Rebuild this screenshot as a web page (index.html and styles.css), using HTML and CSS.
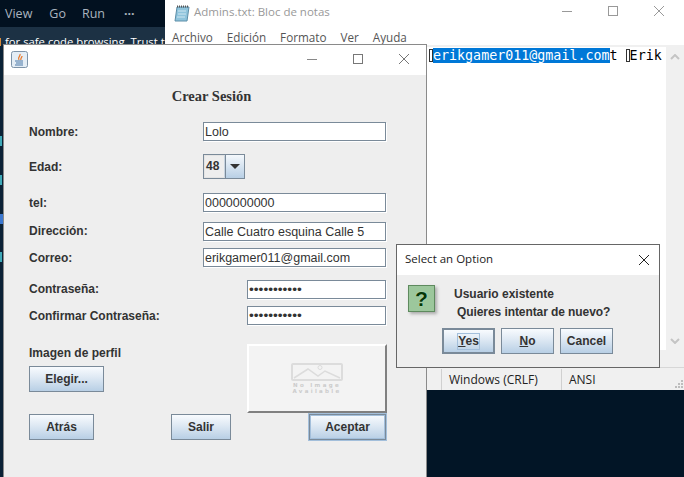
FILE: index.html
```html
<!DOCTYPE html>
<html lang="en">

<head>
    <meta charset="UTF-8" />
    <title>Crear Sesión</title>
    <link rel="stylesheet" href="styles.css">
</head>

<body>
    <!-- Editor behind everything -->
    <div class="editor">
        <div class="editor-menu">
            <span class="menu-view">View</span>
            <span class="menu-go">Go</span>
            <span class="menu-run">Run</span>
            <span class="menu-more">···</span>
        </div>
        <div class="editor-notice"><span class="notice-mark"></span>for safe code browsing. Trust t</div>
        <div class="gutter">
            <span class="mark"></span>
            <span class="mark"></span>
            <span class="mark mark-blue"></span>
            <span class="mark"></span>
        </div>
    </div>

    <!-- Notepad -->
    <div class="notepad">
        <div class="np-title">
            <svg class="np-icon" width="16" height="18" viewBox="0 0 16 18">
                <path d="M3 3h12l-2 14H1z" fill="#8fc4dc" stroke="#5d8ea8" />
                <path d="M4 7h8M4 10h8M3 13h8" stroke="#cfe6f1" />
                <path d="M3 2.5h12" stroke="#555" stroke-dasharray="1 1" stroke-width="2" />
            </svg>
            <span class="np-name">Admins.txt: Bloc de notas</span>
            <div class="np-controls">
                <svg width="12" height="12" viewBox="0 0 12 12"><path d="M1 6.5h10" stroke="#999" /></svg>
                <svg width="12" height="12" viewBox="0 0 12 12"><rect x="1.5" y="1.5" width="9" height="9" fill="none" stroke="#999" /></svg>
                <svg width="12" height="12" viewBox="0 0 12 12"><path d="M1 1l10 10M11 1L1 11" stroke="#999" /></svg>
            </div>
        </div>
        <div class="np-menu">
            <span>Archivo</span><span>Edición</span><span>Formato</span><span>Ver</span><span>Ayuda</span>
        </div>
        <div class="np-main">
            <div class="np-text">
                <span class="box"></span><span class="sel">erikgamer011@gmail.com</span>t <span class="box box-second"></span>Erik
            </div>
            <div class="np-scroll">
                <svg width="10" height="6" viewBox="0 0 10 6"><path d="M1 5l4-4 4 4" fill="none" stroke="#c4c4c4" stroke-width="2" /></svg>
                <svg width="10" height="6" viewBox="0 0 10 6"><path d="M1 1l4 4 4-4" fill="none" stroke="#c4c4c4" stroke-width="2" /></svg>
            </div>
        </div>
        <div class="np-status">
            <span class="st-first"></span>
            <span class="st-eol">Windows (CRLF)</span>
            <span class="st-enc">ANSI</span>
            <svg class="grip" width="10" height="10" viewBox="0 0 10 10">
                <path d="M7 1h2v2H7zM4 4h2v2H4zM7 4h2v2H7zM1 7h2v2H1zM4 7h2v2H4zM7 7h2v2H7z" fill="#bdbdbd" />
            </svg>
        </div>
    </div>

    <!-- Java form window -->
    <div class="win">
        <div class="win-title">
            <svg class="java-icon" width="17" height="17" viewBox="0 0 17 17">
                <rect x="0.5" y="0.5" width="16" height="16" rx="2" fill="#e4edf5" stroke="#7d93a8" />
                <path d="M9 3c1 2-3 3-1 6M11 5c0 2-2 2-1 4" fill="none" stroke="#e8792b" stroke-width="1.3" />
                <path d="M4 10h8M5 12h7M4 14h8" stroke="#4a78a8" />
            </svg>
            <div class="win-controls">
                <svg width="12" height="12" viewBox="0 0 12 12"><path d="M1 6.5h10" stroke="#888" /></svg>
                <svg width="12" height="12" viewBox="0 0 12 12"><rect x="1.5" y="1.5" width="9" height="9" fill="none" stroke="#777" /></svg>
                <svg width="12" height="12" viewBox="0 0 12 12"><path d="M1 1l10 10M11 1L1 11" stroke="#777" /></svg>
            </div>
        </div>
        <div class="form">
            <h1 class="form-title">Crear Sesión</h1>

            <div class="row row-nombre">
                <label class="label-low">Nombre:</label>
                <input class="field" value="Lolo" />
            </div>
            <div class="row row-edad">
                <label>Edad:</label>
                <div class="combo">
                    <span class="combo-value">48</span>
                    <span class="combo-btn"><span class="arrow"></span></span>
                </div>
            </div>
            <div class="row row-tel">
                <label class="label-low">tel:</label>
                <input class="field" value="0000000000" />
            </div>
            <div class="row row-dir">
                <label class="label-high">Dirección:</label>
                <input class="field" value="Calle Cuatro esquina Calle 5" />
            </div>
            <div class="row row-correo">
                <label class="label-low">Correo:</label>
                <input class="field" value="erikgamer011@gmail.com" />
            </div>
            <div class="row row-pass">
                <label class="label-high">Contraseña:</label>
                <input class="field field-short" type="password" value="12345678901" />
            </div>
            <div class="row row-confirm">
                <label>Confirmar Contraseña:</label>
                <input class="field field-short" type="password" value="12345678901" />
            </div>

            <div class="photo-row">
                <div class="photo-left">
                    <label>Imagen de perfil</label>
                    <button class="btn btn-elegir">Elegir...</button>
                </div>
                <div class="photo">
                    <svg width="52" height="18" viewBox="0 0 52 18">
                        <rect x="1" y="1" width="50" height="16" rx="1" fill="none" stroke="#dcdcdc" stroke-width="2" />
                        <path d="M3 15l14-9 10 7 7-5 15 7" fill="none" stroke="#dcdcdc" stroke-width="1.5" />
                        <circle cx="29" cy="4.500" r="2" fill="none" stroke="#dcdcdc" />
                    </svg>
                    <span class="photo-text">No Image</span>
                    <span class="photo-text">Available</span>
                </div>
            </div>

            <div class="actions">
                <button class="btn btn-atras">Atrás</button>
                <button class="btn btn-salir">Salir</button>
                <button class="btn btn-aceptar">Aceptar</button>
            </div>
        </div>
    </div>

    <!-- Option dialog -->
    <div class="dialog">
        <div class="dlg-title">
            <span class="dlg-name">Select an Option</span>
            <svg width="12" height="12" viewBox="0 0 12 12"><path d="M1 1l10 10M11 1L1 11" stroke="#222" /></svg>
        </div>
        <div class="dlg-body">
            <div class="dlg-top">
                <div class="q-icon">?</div>
                <div class="dlg-msg">
                    <p>Usuario existente</p>
                    <p class="msg-second">Quieres intentar de nuevo?</p>
                </div>
            </div>
            <div class="dlg-buttons">
                <button class="btn btn-dlg btn-yes"><span class="focus-mark"><u>Y</u>es</span></button>
                <button class="btn btn-dlg"><u>N</u>o</button>
                <button class="btn btn-dlg">Cancel</button>
            </div>
        </div>
    </div>
</body>

</html>
```

FILE: styles.css
```css
* {
    box-sizing: border-box;
}

html,
body {
    margin: 0;
    padding: 0;
    width: 684px;
    height: 477px;
    overflow: hidden;
}

body {
    position: relative;
    background: #021526;
    font-family: "Liberation Sans", Arial, sans-serif;
}

/* Editor */
.editor {
    position: absolute;
    left: 0;
    top: 0;
    width: 165px;
    height: 477px;
    overflow: hidden;
}

.editor-menu {
    height: 27px;
    background: #021120;
    display: flex;
    align-items: center;
    color: #aab4bf;
    font-family: "Open Sans", sans-serif;
    font-size: 12.500px;
}

.menu-view {
    margin-left: 5px;
}

.menu-go {
    margin-left: 17px;
}

.menu-run {
    margin-left: 16px;
}

.menu-more {
    margin-left: 19px;
    font-weight: bold;
}

.editor-notice {
    height: 18px;
    background: #1c3144;
    color: #fff;
    padding-top: 6px;
    font-family: "Open Sans", sans-serif;
    font-size: 11.300px;
    line-height: 17px;
    white-space: nowrap;
}

.notice-mark {
    display: inline-block;
    width: 1px;
    height: 8px;
    margin-right: 4px;
    background: #d88a3a;
}

.gutter {
    background: #0b2236;
    height: 432px;
    padding-top: 91px;
}

.mark {
    display: block;
    width: 2px;
    height: 10px;
    margin-bottom: 29px;
    background: #3fa9b8;
}

.mark-blue {
    width: 3px;
    margin-bottom: 28px;
    background: #3c78d0;
}

/* Notepad */
.notepad {
    position: absolute;
    left: 165px;
    top: 0;
    width: 519px;
    height: 390px;
    background: #f0f0f0;
    display: flex;
    flex-direction: column;
    font-family: "Open Sans", sans-serif;
}

.np-title {
    height: 25px;
    flex: none;
    background: #fff;
    display: flex;
    align-items: center;
    padding-left: 9px;
    color: #999;
    font-size: 11.500px;
}

.np-name {
    margin-left: 4px;
    margin-top: -2px;
}

.np-controls {
    margin-left: auto;
    display: flex;
    gap: 34px;
    padding-right: 19px;
    margin-top: -3px;
}

.np-menu {
    height: 20px;
    flex: none;
    background: #fff;
    display: flex;
    align-items: center;
    padding-top: 3px;
    padding-left: 7px;
    color: #555;
    font-size: 11.700px;
    gap: 14px;
}

.np-main {
    height: 322px;
    flex: none;
    display: flex;
    padding-top: 2px;
    background: #f0f0f0;
}

.np-text {
    width: 501px;
    height: 303px;
    background: #fff;
    padding-left: 264px;
    font-family: "DejaVu Sans Mono", monospace;
    font-size: 13.330px;
    line-height: 17px;
    color: #000;
    white-space: nowrap;
}

.sel {
    background: #0078d7;
    color: #fff;
}

.box {
    display: inline-block;
    width: 4px;
    height: 13px;
    vertical-align: -2px;
    border: 1px solid #333;
}

.np-scroll {
    width: 18px;
    height: 303px;
    display: flex;
    flex-direction: column;
    align-items: center;
    justify-content: space-between;
    padding: 7px 0 6px;
}

.np-status {
    flex: none;
    height: 23px;
    border-top: 1px solid #d7d7d7;
    display: flex;
    align-items: center;
    font-size: 12px;
    color: #222;
}

.np-status span {
    height: 21px;
    line-height: 21px;
    border-left: 1px solid #d0d0d0;
    padding-left: 7px;
}

.st-first {
    width: 276px;
    border-left: none !important;
}

.st-eol {
    width: 120px;
}

.grip {
    margin-left: auto;
    margin-top: 10px;
}

/* Java window */
.win {
    position: absolute;
    left: 3px;
    top: 44px;
    width: 424px;
    height: 433px;
    background: #eee;
    border: 1px solid #8a8a8a;
    border-bottom: none;
    display: flex;
    flex-direction: column;
}

.win-title {
    height: 30px;
    flex: none;
    background: #fff;
    display: flex;
    align-items: center;
    padding: 0 0 2px 7px;
}

.win-controls {
    margin-left: auto;
    display: flex;
    gap: 34px;
    padding-right: 16px;
}

.form {
    padding-left: 25px;
    color: #333;
    font-size: 12px;
}

.form label {
    font-weight: bold;
    font-size: 12px;
    color: #333;
}

.form-title {
    margin: 14px 0 0;
    width: 365px;
    height: 14px;
    text-align: center;
    font-family: "Liberation Serif", serif;
    font-size: 14.500px;
    line-height: 14px;
    color: #333;
}

.row {
    display: flex;
    align-items: center;
    height: 19px;
}

.row label {
    width: 174px;
    flex: none;
}

.row .label-low {
    padding-top: 1px;
}

.row .label-high {
    margin-top: -2px;
}

.row-nombre {
    margin-top: 19px;
}

.row-edad {
    margin-top: 13px;
    height: 25px;
}

.row-tel {
    margin-top: 14px;
}

.row-dir {
    margin-top: 10px;
}

.row-correo {
    margin-top: 7px;
}

.row-pass {
    margin-top: 13px;
}

.row-confirm {
    margin-top: 7px;
}

.field {
    width: 183px;
    height: 19px;
    flex: none;
    padding: 1px 1px 0;
    border: 1px solid #7a8a99;
    box-shadow: 1px 1px 0 #fff;
    outline: none;
    background: #fff;
    color: #333;
    font-family: "Liberation Sans", Arial, sans-serif;
    font-size: 12.500px;
}

.field-short {
    width: 139px;
    margin-left: 44px;
    font-size: 13.700px;
    padding-top: 0;
}

.combo {
    width: 42px;
    height: 25px;
    display: flex;
    border: 1px solid #7a8a99;
}

.combo-value {
    width: 21px;
    background: #eeeeee;
    border: 1px solid #e4e4e4;
    border-right: 1px solid #c8d4e0;
    font-weight: bold;
    line-height: 21px;
    padding-left: 1px;
}

.combo-btn {
    flex: 1;
    border-left: 1px solid #7a8a99;
    background: linear-gradient(#f4f8fc, #b8cfe5);
    display: flex;
    align-items: center;
    justify-content: center;
}

.arrow {
    width: 0;
    height: 0;
    border-left: 5px solid transparent;
    border-right: 5px solid transparent;
    border-top: 5px solid #333;
}

.photo-row {
    margin-top: 19px;
    display: flex;
    height: 69px;
}

.photo-left {
    width: 218px;
    flex: none;
    padding-top: 2px;
}

.photo-left label {
    display: block;
    height: 20px;
    line-height: 14px;
}

.photo {
    width: 140px;
    height: 69px;
    background: #f3f3f3;
    border: 2px solid #fff;
    border-right-color: #808080;
    border-bottom-color: #808080;
    display: flex;
    flex-direction: column;
    align-items: center;
    padding-top: 17px;
}

.photo-text {
    height: 6px;
    font-size: 5.500px;
    line-height: 6px;
    font-weight: bold;
    letter-spacing: 2.300px;
    color: #cccccc;
    text-align: center;
    font-family: "DejaVu Sans", sans-serif;
    white-space: nowrap;
}

.photo svg {
    margin-bottom: 1px;
}

.btn {
    height: 26px;
    padding: 0;
    border: 1px solid #7a8a99;
    background: linear-gradient(#f8fbfe, #dde8f3 45%, #b8cfe5);
    color: #333;
    font-family: "Liberation Sans", Arial, sans-serif;
    font-size: 12px;
    font-weight: bold;
}

.btn-elegir {
    width: 75px;
}

.actions {
    margin-top: 1px;
    display: flex;
    height: 26px;
}

.btn-atras {
    width: 65px;
}

.btn-salir {
    width: 60px;
    margin-left: 77px;
}

.btn-aceptar {
    width: 77px;
    margin-left: 78px;
    box-shadow: 0 0 0 1px #a3bfdb inset, 0 0 0 1px #a3bfdb;
}

/* Dialog */
.dialog {
    position: absolute;
    left: 396px;
    top: 244px;
    width: 264px;
    height: 124px;
    background: #eee;
    border: 1px solid #666;
    display: flex;
    flex-direction: column;
}

.dlg-title {
    height: 30px;
    flex: none;
    background: #fff;
    display: flex;
    align-items: center;
    justify-content: space-between;
    padding: 0 9px 0 8px;
    font-family: "Open Sans", sans-serif;
    font-size: 11.500px;
    color: #222;
}

.dlg-name {
    margin-top: -3px;
}

.dlg-top {
    display: flex;
    padding: 10px 0 0 11px;
    height: 53px;
}

.q-icon {
    width: 27px;
    height: 27px;
    background: #9cc79c;
    border: 1px solid #5e8a5e;
    box-shadow: 2px 2px 3px #aaa;
    color: #063806;
    font-family: "Liberation Sans", Arial, sans-serif;
    font-size: 21px;
    font-weight: bold;
    line-height: 25px;
    text-align: center;
    text-shadow: 0 0 1px #d8f0d8;
}

.dlg-msg {
    margin-left: 19px;
    color: #333;
    font-size: 12px;
    font-weight: bold;
}

.dlg-msg p {
    margin: 2px 0 0;
    height: 14px;
    line-height: 14px;
}

.dlg-msg .msg-second {
    margin-top: 4px;
    padding-left: 3px;
    letter-spacing: -0.080px;
}

.dlg-buttons {
    display: flex;
    gap: 6px;
    padding-left: 45px;
}

.btn-dlg {
    width: 53px;
}

.btn-yes {
    border-width: 2px;
}

.focus-mark {
    border: 1px solid #a3bfdb;
    padding: 0 0 1px;
}
```
